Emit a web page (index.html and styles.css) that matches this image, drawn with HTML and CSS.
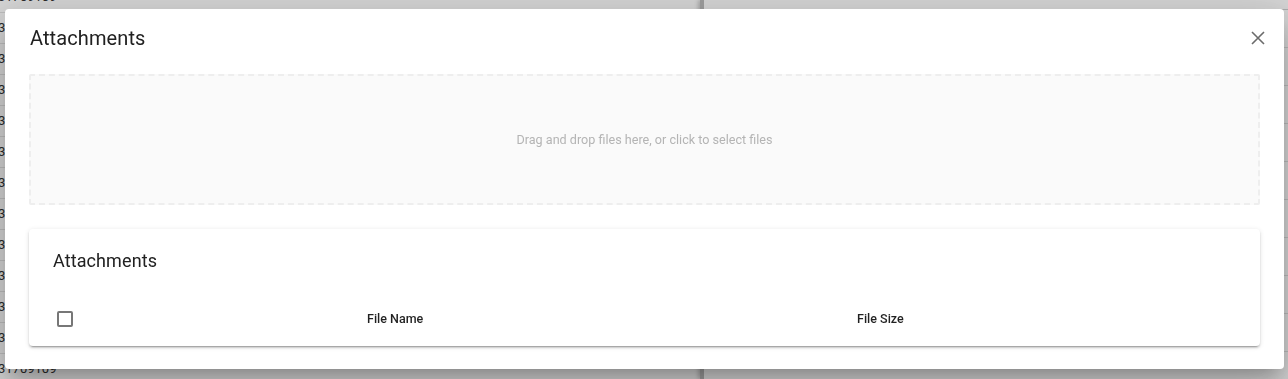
FILE: index.html
```html
<!DOCTYPE html>
<html lang="en">
<head>
  <meta charset="UTF-8" />
  <title>Attachments</title>
  <link rel="stylesheet" href="styles.css">
</head>
<body>
  <div class="app">
    <div class="left-panel">
      <div class="row">31709109</div>
      <div class="row">31709109</div>
      <div class="row">31709109</div>
      <div class="row">31709109</div>
      <div class="row">31709109</div>
      <div class="row">31709109</div>
      <div class="row">31709109</div>
      <div class="row">31709109</div>
      <div class="row">31709109</div>
      <div class="row">31709109</div>
      <div class="row">31709109</div>
      <div class="row">31709109</div>
      <div class="row">31709109</div>
    </div>
    <div class="right-panel">
      <div class="right-head">
        <span>Vessel</span>
        <span>Reference No</span>
        <span>Consignee</span>
      </div>
      <div class="right-row"><span></span><span></span><span>Consignee Ltd</span></div>
      <div class="right-row"><span></span><span></span><span>Consignee Ltd</span></div>
      <div class="right-row"><span></span><span></span><span>Consignee Ltd</span></div>
      <div class="right-row"><span></span><span></span><span>Consignee Ltd</span></div>
      <div class="right-row"><span></span><span></span><span>Consignee Ltd</span></div>
      <div class="right-row"><span></span><span></span><span>Consignee Ltd</span></div>
      <div class="right-row"><span></span><span></span><span>Consignee Ltd</span></div>
      <div class="right-row"><span></span><span></span><span>Consignee Ltd</span></div>
      <div class="right-row"><span></span><span></span><span>Consignee Ltd</span></div>
    </div>
  </div>

  <div class="backdrop"></div>

  <div class="dialog">
    <div class="dialog-header">
      <h2 class="dialog-title">Attachments</h2>
      <button class="close-btn" aria-label="Close">
        <svg width="14" height="14" viewBox="0 0 14 14">
          <path d="M1 1 L13 13 M13 1 L1 13" stroke="#6b6b6b" stroke-width="1.6" fill="none" />
        </svg>
      </button>
    </div>

    <div class="dropzone">
      <p>Drag and drop files here, or click to select files</p>
    </div>

    <div class="card">
      <h3 class="card-title">Attachments</h3>
      <div class="table-head">
        <div class="cell-check"><span class="checkbox"></span></div>
        <div class="cell">File Name</div>
        <div class="cell">File Size</div>
      </div>
    </div>
  </div>
</body>
</html>
```

FILE: styles.css
```css
* {
  box-sizing: border-box;
}

body {
  margin: 0;
  height: 100vh;
  overflow: hidden;
  font-family: Roboto, 'Liberation Sans', Arial, sans-serif;
  background-color: #ffffff;
  color: #222;
}

/* page behind the dialog */
.app {
  display: flex;
  height: 100%;
}

.left-panel {
  width: 702px;
  margin-top: -18px;
  margin-left: -2px;
}

.row {
  height: 31px;
  line-height: 30px;
  font-size: 13px;
  border-bottom: 1px solid #e4e4e4;
  color: #333;
}

.right-panel {
  flex: 1;
  border-left: 4px solid #bdbdbd;
  box-shadow: -2px 0 4px rgba(0, 0, 0, 0.2);
}

.right-head {
  display: grid;
  grid-template-columns: 218px 218px 1fr;
  padding-left: 24px;
  height: 32px;
  margin-top: -22px;
  line-height: 30px;
  font-size: 12px;
  color: #555;
  border-bottom: 1px solid #d0d0d0;
}

.right-row {
  display: grid;
  grid-template-columns: 218px 218px 1fr;
  padding-left: 24px;
  height: 38px;
  line-height: 38px;
  font-size: 13px;
  border-bottom: 1px solid #e0e0e0;
}

/* overlay */
.backdrop {
  position: fixed;
  inset: 0;
  background-color: rgba(0, 0, 0, 0.17);
}

.dialog {
  position: fixed;
  left: 5px;
  top: 9px;
  width: 1279px;
  height: 360px;
  padding: 17px 24px 23px 24px;
  background-color: #ffffff;
  border-radius: 4px;
  box-shadow: 0 11px 15px -7px rgba(0, 0, 0, 0.2),
              0 24px 38px 3px rgba(0, 0, 0, 0.14),
              0 9px 46px 8px rgba(0, 0, 0, 0.12);
}

.dialog-header {
  display: flex;
  justify-content: space-between;
  align-items: center;
  height: 24px;
  margin-bottom: 24px;
}

.dialog-title {
  margin: 0 0 0 1px;
  font-size: 20px;
  font-weight: 400;
  line-height: 24px;
  color: #212121;
  letter-spacing: 0.1px;
}

.close-btn {
  background: none;
  border: none;
  padding: 0;
  margin-right: -5px;
  width: 14px;
  height: 14px;
  cursor: pointer;
  display: flex;
}

.dropzone {
  height: 131px;
  display: flex;
  align-items: center;
  justify-content: center;
  background-color: #fafafa;
  border: 2px dashed #eeeeee;
  border-radius: 2px;
  color: #b4b4b4;
  font-size: 12.6px;
}

.dropzone p {
  margin: 0;
}

.card {
  margin-top: 24px;
  height: 117px;
  padding: 21px 0 0 0;
  background-color: #ffffff;
  border-radius: 4px;
  box-shadow: 0 3px 1px -2px rgba(0, 0, 0, 0.2),
              0 2px 2px 0 rgba(0, 0, 0, 0.14),
              0 1px 5px 0 rgba(0, 0, 0, 0.12);
}

.card-title {
  margin: 0 0 0 24px;
  font-size: 18px;
  font-weight: 400;
  line-height: 22px;
  color: #212121;
  letter-spacing: 0.1px;
}

.table-head {
  display: grid;
  grid-template-columns: 338px 490px 1fr;
  align-items: center;
  height: 48px;
  margin-top: 22px;
  font-size: 12.5px;
  font-weight: 500;
  color: rgba(0, 0, 0, 0.87);
}

.cell-check {
  padding-left: 28px;
  display: flex;
  align-items: center;
}

.checkbox {
  width: 16px;
  height: 16px;
  border: 2px solid #777;
  border-radius: 2px;
  margin-top: 1px;
}
```
